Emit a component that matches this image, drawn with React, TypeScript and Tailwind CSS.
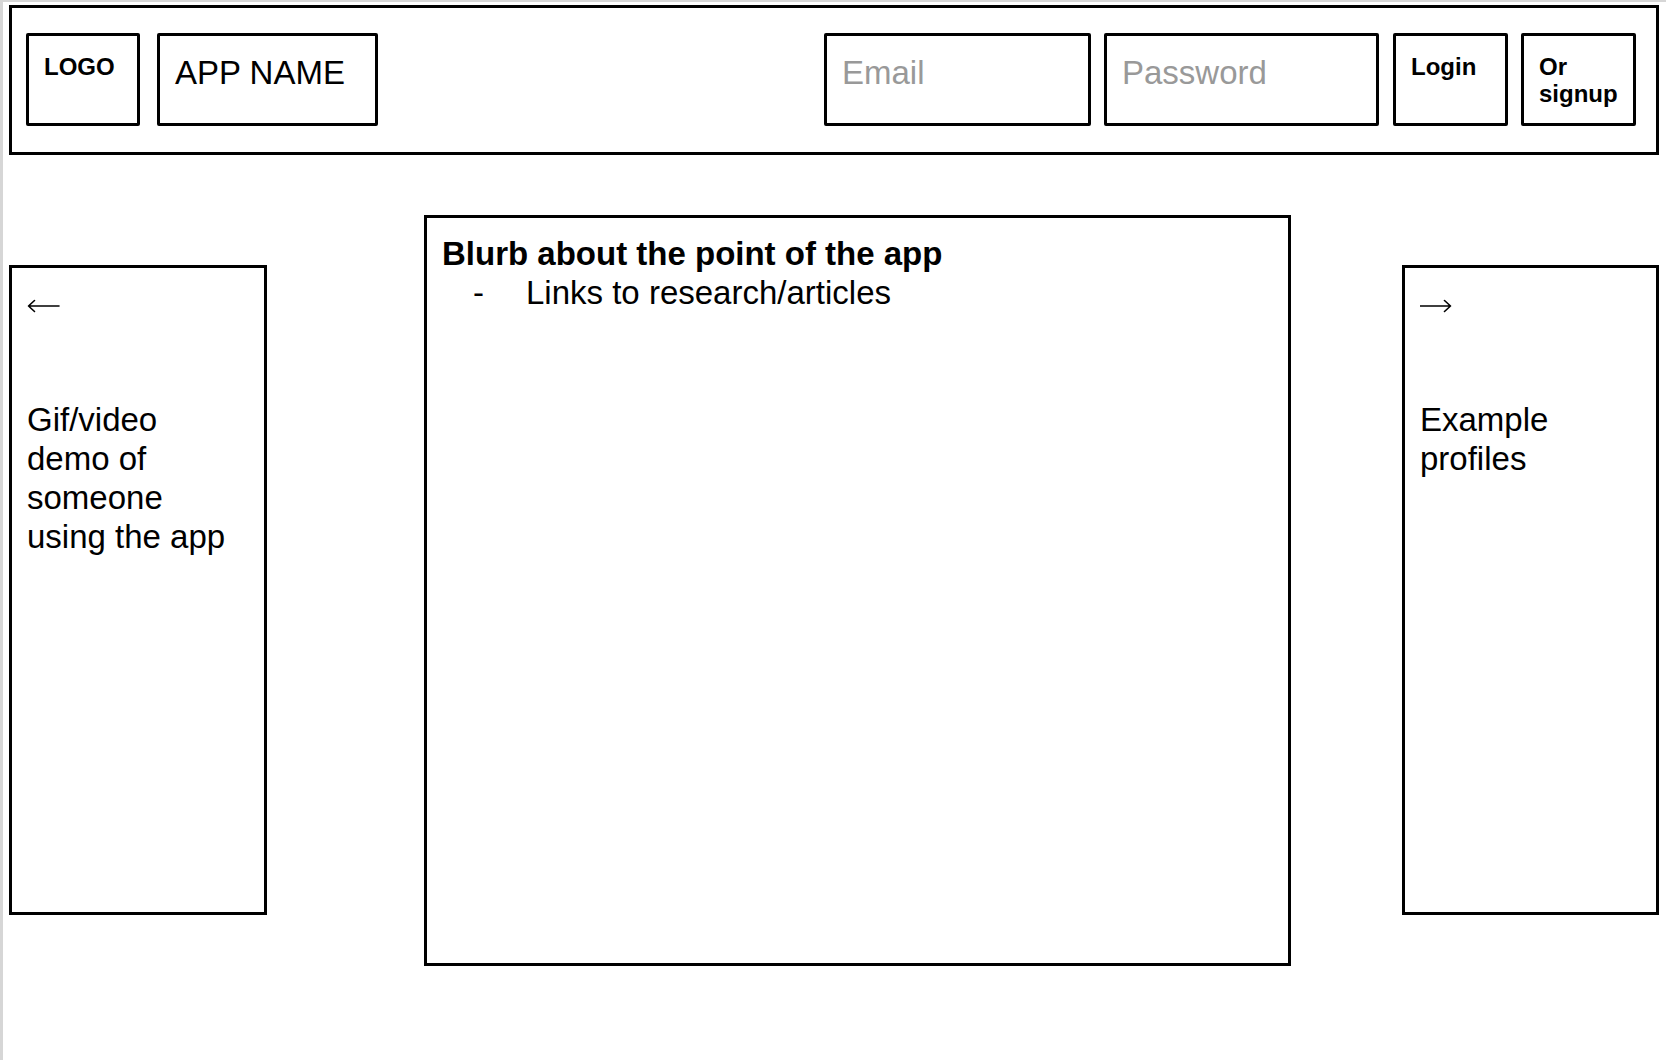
import React from 'react';

const font = { fontFamily: '"Liberation Sans", Arial, sans-serif' };

function HeaderBox(props: { width: string; children?: React.ReactNode; pad?: string }) {
    return (
        <div className={`${props.width} h-[93px] shrink-0 border-[3px] border-black rounded-[2px] px-[15px] ${props.pad ?? 'pt-[17px]'}`}>
            {props.children}
        </div>
    );
}

function Arrow(props: { dir: 'left' | 'right' }) {
    const d = props.dir === 'left'
        ? 'M1.5 7 H32 M7.5 1.5 L1.5 7 L7.5 12.5'
        : 'M0 7 H30.5 M24.5 1.5 L30.5 7 L24.5 12.5';
    return (
        <svg width="33" height="14" viewBox="0 0 33 14" className="block" fill="none" stroke="black" strokeWidth="1.6"
             strokeLinecap="round" strokeLinejoin="round">
            <path d={d}/>
        </svg>
    );
}

export default function App() {
    return (
        <div style={font} className="min-h-[1060px] w-[1666px] bg-white text-black border-l-[3px] border-t-[2px] border-[#d6d6d6]">
            {/* top bar */}
            <div className="ml-[6px] mt-[3px] w-[1650px] h-[150px] border-[3px] border-black flex items-start pt-[25px] pl-[14px]">
                <HeaderBox width="w-[114px]">
                    <span className="text-[24px] leading-[27px] font-bold">LOGO</span>
                </HeaderBox>
                <div className="ml-[17px]">
                    <HeaderBox width="w-[221px]" pad="pt-[18px]">
                        <span className="text-[33px] leading-[37px]">APP NAME</span>
                    </HeaderBox>
                </div>

                <div className="ml-auto mr-[20px] flex gap-[13px]">
                    <HeaderBox width="w-[267px]" pad="pt-[18px]">
                        <input type="text" placeholder="Email"
                               className="w-full h-[37px] text-[33px] leading-[37px] bg-transparent outline-none placeholder:text-[#999999]"/>
                    </HeaderBox>
                    <HeaderBox width="w-[275px]" pad="pt-[18px]">
                        <input type="password" placeholder="Password"
                               className="w-full h-[37px] text-[33px] leading-[37px] bg-transparent outline-none placeholder:text-[#999999]"/>
                    </HeaderBox>
                    <div className="ml-px">
                        <HeaderBox width="w-[115px]">
                            <button className="text-[24px] leading-[27px] font-bold cursor-pointer">Login</button>
                        </HeaderBox>
                    </div>
                    <HeaderBox width="w-[115px]">
                        <button className="text-left text-[24px] leading-[27px] font-bold cursor-pointer">Or<br/>signup</button>
                    </HeaderBox>
                </div>
            </div>

            {/* content */}
            <div className="flex items-start ml-[6px]">
                <div className="mt-[110px] w-[258px] h-[650px] shrink-0 border-[3px] border-black pl-[15px] pr-[37px] pt-[15px] text-[33px] leading-[39px]">
                    <div className="h-[39px] flex items-center pt-[6px]"><Arrow dir="left"/></div>
                    <div className="mt-[78px]">Gif/video demo of someone using the app</div>
                </div>

                <div className="mt-[60px] ml-[157px] w-[867px] h-[751px] shrink-0 border-[3px] border-black px-[15px] pt-[16px] text-[33px] leading-[39px]">
                    <div className="font-bold">Blurb about the point of the app</div>
                    <ul>
                        <li className="flex">
                            <span className="ml-[31px] w-[53px] shrink-0">-</span>
                            <span>Links to research/articles</span>
                        </li>
                    </ul>
                </div>

                <div className="mt-[110px] ml-[111px] w-[257px] h-[650px] shrink-0 border-[3px] border-black pl-[15px] pr-[41px] pt-[15px] text-[33px] leading-[39px]">
                    <div className="h-[39px] flex items-center pt-[7px]"><Arrow dir="right"/></div>
                    <div className="mt-[78px]">Example profiles</div>
                </div>
            </div>
        </div>
    );
}
